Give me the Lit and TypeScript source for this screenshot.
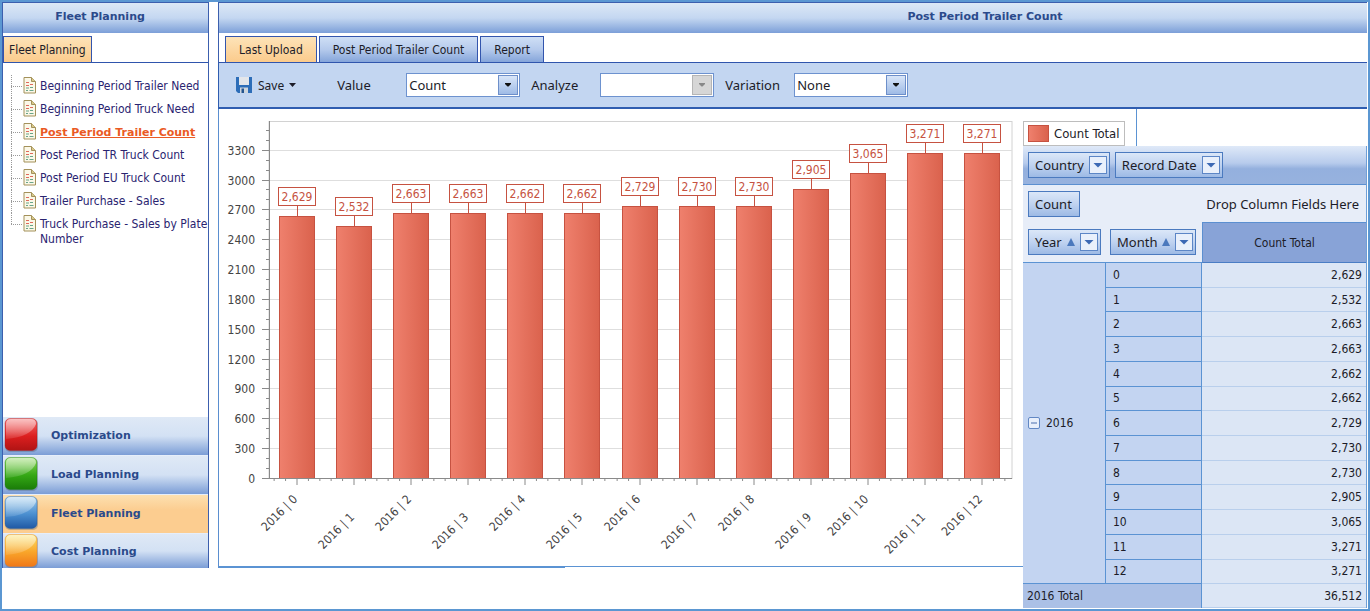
import { LitElement, html, css, svg } from "lit";
import { customElement, state } from "lit/decorators.js";
import { classMap } from "lit/directives/class-map.js";

const COUNTS = [2629, 2532, 2663, 2663, 2662, 2662, 2729, 2730, 2730, 2905, 3065, 3271, 3271];
const fmt = (n: number) => n.toLocaleString("en-US");

@customElement("period-chart")
export class PeriodChart extends LitElement {
  static styles = css`
    :host { display: block; }
    svg { display: block; width: 100%; height: auto; font-family: "DejaVu Sans Condensed", "Noto Sans", sans-serif; font-size: 12px; }
    .grid { stroke: #dedede; }
    .frame { fill: none; stroke: #d2d2d2; }
    .axis { stroke: #8a8a8a; }
    .tick { fill: #444; text-anchor: end; }
    .bar { fill: url(#barFill); stroke: #c65241; }
    .stem { stroke: #c65241; }
    .box { fill: #fff; stroke: #c65241; }
    .value { fill: #c65241; text-anchor: middle; }
  `;

  render() {
    const left = 50, right = 793, top = 12, base = 369;
    const scale = 0.0995;
    const step = (right - left) / COUNTS.length;
    const y = (v: number) => Math.round(base - v * scale);
    const majors = Array.from({ length: 12 }, (_, i) => i * 300);
    const minors = Array.from({ length: 36 }, (_, i) => i * 100).filter((v) => v % 300);
    const subs = [-2, -1, 0, 1, 2];
    return html`<svg viewBox="0 0 804 457" role="img" aria-label="Count total by period">
      <defs>
        <linearGradient id="barFill">
          <stop offset="0" stop-color="#ef806d"></stop>
          <stop offset="1" stop-color="#da624d"></stop>
        </linearGradient>
      </defs>
      <rect class="frame" x=${left} y=${top + 0.5} width=${right - left} height=${base - top}></rect>
      ${majors.map((v) => svg`
        <line class="grid" x1=${left} x2=${right} y1=${y(v) + 0.5} y2=${y(v) + 0.5}></line>
        <line class="axis" x1=${left - 7} x2=${left} y1=${y(v) + 0.5} y2=${y(v) + 0.5}></line>
        <text class="tick" x="36" y=${y(v) + 5}>${v}</text>`)}
      ${minors.map((v) => svg`<line class="axis" x1=${left - 3} x2=${left} y1=${y(v) + 0.5} y2=${y(v) + 0.5}></line>`)}
      ${COUNTS.map((v, i) => {
        const x = Math.floor(left + step * (i + 0.5) - 0.5);
        const t = y(v);
        const ly = i % 2 ? 406 : 388;
        return svg`
          <rect class="bar" x=${x - 17.5} y=${t + 0.5} width="35" height=${base - t}></rect>
          <line class="stem" x1=${x + 0.5} x2=${x + 0.5} y1=${t - 11} y2=${t}></line>
          <rect class="box" x=${x - 18.5} y=${t - 28.5} width="37" height="18"></rect>
          <text class="value" x=${x} y=${t - 15}>${fmt(v)}</text>
          ${subs.map((k) => svg`<line class="axis" x1=${x + k * step / 5} x2=${x + k * step / 5} y1=${base} y2=${base + (k ? 3 : 7)}></line>`)}
          <text class="tick" transform="translate(${x + 1} ${ly + 3}) rotate(-45)">2016 | ${i}</text>`;
      })}
      <line class="axis" x1=${left + 0.5} x2=${left + 0.5} y1=${top} y2=${base}></line>
      <line class="axis" x1=${left} x2=${right} y1=${base + 0.5} y2=${base + 0.5}></line>
    </svg>`;
  }
}

@customElement("pivot-grid")
export class PivotGrid extends LitElement {
  @state() private open = true;

  static styles = css`
    :host { display: flex; flex-direction: column; flex: 1; color: #1c1c28; border-right: 1px solid #6f9fd6;
      font: 12px "DejaVu Sans Condensed", "Noto Sans", sans-serif; }
    .filters { display: flex; gap: 5px; align-items: center; height: 39px; box-sizing: border-box; padding: 0 5px;
      background: linear-gradient(#dfe9f8, #b7cbec 45%, #94b0de 60%, #97b2de); border-bottom: 1px solid #5b8fd0; }
    .field { display: inline-flex; align-items: center; gap: 5px; height: 26px; box-sizing: border-box; padding: 0 2px 0 6px;
      border: 1px solid #4b7abf; background: linear-gradient(#dbe7f8, #c0d3f0 50%, #9dbae5); font: 13px "Noto Sans", sans-serif; color: #1c1c28; white-space: nowrap; }
    .field.plain { padding-right: 7px; }
    .drop { width: 16px; height: 16px; border: 1px solid #5c86c6; background: #e9f0fb; display: block; }
    .sort { width: 8px; height: 8px; display: block; }
    table { flex: 1; width: 100%; border-collapse: separate; border-spacing: 0; table-layout: fixed; }
    .c1 { width: 83px; }
    .c2 { width: 96px; }
    th, td { padding: 0; font-weight: normal; text-align: left; }
    .zone { height: 37px; padding-left: 5px; background: #e7edf8; }
    .hint { text-align: right; padding: 0 7px 0 0; font: 13px "Noto Sans", sans-serif; white-space: nowrap; }
    .head { height: 39px; padding-left: 5px; background: #e7edf8; border-bottom: 1px solid #5b93d3; }
    .head.next { padding-left: 4px; }
    .total { height: 39px; text-align: center; background: #88a3d7; border-top: 1px solid #5b8fd0; border-left: 1px solid #5b8fd0; border-bottom: 1px solid #4a7dc4; padding: 0; }
    .year, .month, .grand { background: #c3d4f1; }
    .year { padding-left: 4px; border-right: 1px solid #5b93d3; border-bottom: 1px solid #5b93d3; }
    .month { height: 22px; padding-left: 7px; border-right: 1px solid #5b93d3; border-bottom: 1px solid #5b93d3; }
    .grand { height: 22px; padding-left: 4px; background: #abc0e6; border-right: 1px solid #5b93d3; }
    .num { text-align: right; padding-right: 4px; background: #dce6f5; border-bottom: 1px solid #b9cfec; }
    .toggle { display: flex; align-items: center; gap: 5px; padding: 0; border: 0; background: none; font: inherit; color: inherit; }
    .toggle svg { width: 14px; height: 14px; }
  `;

  private drop() {
    return html`<svg class="drop" viewBox="0 0 16 16" aria-hidden="true"><path d="M3.500 6h9L8 10.500z" fill="#3c69b4"></path></svg>`;
  }

  private field(name: string, sorted = false) {
    return html`<button class="field" type="button">${name}
      ${sorted ? html`<svg class="sort" viewBox="0 0 8 8" aria-hidden="true"><path d="M4 0l4 8H0z" fill="#4b79bd"></path></svg>` : ""}
      ${this.drop()}</button>`;
  }

  render() {
    const total = COUNTS.reduce((a, b) => a + b, 0);
    const rows = this.open ? COUNTS : [];
    return html`
      <div class="filters">${this.field("Country")}${this.field("Record Date")}</div>
      <table>
        <colgroup><col class="c1"><col class="c2"><col></colgroup>
        <thead>
          <tr>
            <td class="zone" colspan="2"><button class="field plain" type="button">Count</button></td>
            <td class="zone hint">Drop Column Fields Here</td>
          </tr>
          <tr>
            <th class="head" scope="col">${this.field("Year", true)}</th>
            <th class="head next" scope="col">${this.field("Month", true)}</th>
            <th class="total" scope="col">Count Total</th>
          </tr>
        </thead>
        <tbody>
          ${rows.map((v, i) => html`<tr>
            ${i === 0 ? html`<th class="year" scope="rowgroup" rowspan=${rows.length}>
              <button class="toggle" type="button" aria-expanded="true" @click=${() => (this.open = false)}>
                <svg viewBox="0 0 14 14" aria-hidden="true"><rect x="1.500" y="1.500" width="11" height="11" rx="1.500" fill="#e8effb" stroke="#6288c4"></rect><path d="M4 7h6" stroke="#4b6fae"></path></svg>2016
              </button></th>` : ""}
            <th class="month" scope="row">${i}</th>
            <td class="num">${fmt(v)}</td>
          </tr>`)}
          <tr>
            <th class="grand" scope="row" colspan="2" @click=${() => (this.open = true)}>2016 Total</th>
            <td class="num">${fmt(total)}</td>
          </tr>
        </tbody>
      </table>`;
  }
}

const REPORTS = [
  "Beginning Period Trailer Need",
  "Beginning Period Truck Need",
  "Post Period Trailer Count",
  "Post Period TR Truck Count",
  "Post Period EU Truck Count",
  "Trailer Purchase - Sales",
  "Truck Purchase - Sales by Plate Number",
];

const MODULES = [
  { name: "Optimization", tone: "red" },
  { name: "Load Planning", tone: "green" },
  { name: "Fleet Planning", tone: "blue" },
  { name: "Cost Planning", tone: "orange" },
];

@customElement("app-root")
export class AppRoot extends LitElement {
  @state() private tab = 0;

  static styles = css`
    :host { display: flex; box-sizing: border-box; min-height: 100vh; padding: 0 0 1px; gap: 10px; background: #fff;
      border: 2px solid #5b97d2; font-family: "DejaVu Sans Condensed", "Noto Sans", sans-serif; font-size: 12px; color: #1c1c28; }
    .side { flex: none; width: 207px; box-sizing: border-box; margin: 0 -1px 40px 0; display: flex; flex-direction: column;
      border: 1px solid #3c5fae; border-bottom: 0; }
    .main { flex: 1; min-width: 0; padding-right: 1px; display: flex; flex-direction: column; }
    .title { margin: 0; height: 31px; box-sizing: border-box; padding-bottom: 3px; display: flex; align-items: center; justify-content: center;
      font: bold 11px "DejaVu Sans", sans-serif; color: #2b4a8b; background: linear-gradient(#dce8f6, #c4d7f1 50%, #7c9fd8); }
    .side .title { height: 30px; padding-right: 11px; }
    .main .title { padding-left: 384px; border-top: 1px solid #3c5fae; border-left: 1px solid #3c5fae; }
    .tabs { display: flex; gap: 2px; padding-top: 3px; border-bottom: 1px solid #2f55ad; }
    .main .tabs { padding-left: 6px; border-left: 1px solid #3c5fae; }
    .tab { height: 26px; padding: 0 13px; border: 1px solid #3355ad; border-bottom: 0; font: inherit; color: #1c1c28;
      background: linear-gradient(#cfdff5, #b5caec 50%, #85a5da); }
    .tab.on { background: linear-gradient(#fde3b8, #fbcb8c); }
    .side .tab { padding: 0 5px; }
    .tree { flex: 1; list-style: none; margin: 0 -4px 0 0; padding: 12px 0 0 8px; }
    .node { position: relative; display: flex; min-height: 23px; }
    .node::before { content: ""; width: 11px; height: 11px; flex: none; border-bottom: 1px dotted #999; }
    .node::after { content: ""; position: absolute; left: 0; top: 0; bottom: 0; border-left: 1px dotted #999; }
    .node:last-child::after { bottom: auto; height: 11px; }
    .node svg { flex: none; width: 13px; height: 17px; margin: 2px 4px 0 1px; }
    .node a { color: #2a2470; text-decoration: none; line-height: 15px; padding-top: 4px; }
    .node a.on { font: bold 11px/15px "DejaVu Sans", sans-serif; color: #ea5a24; text-decoration: underline; }
    .mod { flex: none; height: 39px; display: flex; align-items: center; gap: 13px; padding: 0 0 2px 1px; border: 0; border-bottom: 1px solid #e6eefa;
      background: linear-gradient(#dfe9f6 0, #d3e1f4 50%, #7b9dd6); font: bold 11px "DejaVu Sans", sans-serif; color: #2b4a8b; text-align: left; }
    .mod.on { background: linear-gradient(#fde0b0, #fccd90 40%); }
    .mod:last-child { height: 34px; padding-bottom: 0; border-bottom: 0; overflow: hidden; }
    .cube { width: 34px; height: 34px; flex: none; }
    .bar { display: flex; align-items: center; height: 46px; box-sizing: border-box; padding-left: 16px; background: #c3d6f1;
      border-bottom: 2px solid #2f5db0; border-left: 1px solid #2f5db0; font: 13px "Noto Sans", sans-serif; }
    .save { display: flex; align-items: center; gap: 5px; padding: 0; border: 0; background: none; font: inherit; font-size: 12px; color: inherit; margin-right: 41px; }
    .disk { width: 18px; height: 18px; }
    .caret { width: 7px; height: 4px; }
    .bar label { flex: none; width: 69px; }
    .combo + label { margin-left: 11px; }
    .combo { position: relative; width: 114px; height: 24px; }
    .combo select { appearance: none; width: 100%; height: 24px; box-sizing: border-box; padding: 0 22px 0 2px; border: 1px solid #6d92cf; border-radius: 0; background: #fff;
      font: inherit; color: #1c1c28; opacity: 1; }
    .combo svg { position: absolute; right: 2px; top: 2px; width: 18px; height: 18px; border: 1px solid #6d8fca; background: linear-gradient(#d8e5f8, #9fbbe6); pointer-events: none; }
    .combo.off svg { border-color: #b5b5b5; background: #d6d6d6; }
    .work { flex: 1; display: flex; }
    .plot { flex: 1; min-width: 0; align-self: flex-start; border-left: 1px solid #5b8fd0; }
    .plot::after { content: ""; display: block; height: 1px; width: 43%; background: #5b93d3; }
    .plot period-chart { border-bottom: 1px solid #5b93d3; }
    .data { flex: none; width: 344px; display: flex; flex-direction: column; }
    .legend { align-self: flex-start; padding: 12px 11px 0 0; border-right: 1px solid #5b93d3; }
    .key { display: flex; align-items: center; gap: 5px; height: 25px; box-sizing: border-box; padding: 0 4px; border: 1px solid #bdbdbd; font-size: 13px; }
    .swatch { width: 19px; height: 15px; border: 1px solid #c65241; background: linear-gradient(90deg, #ef806d, #da624d); }
  `;

  private page() {
    return html`<svg viewBox="0 0 13 17" aria-hidden="true">
      <path d="M1 .5h7.500l4 4V16H1z" fill="#fbf8e8" stroke="#a3915a"></path>
      <path d="M8.500.5v4h4" fill="#d8c98c" stroke="#a3915a"></path>
      <path d="M3 5.500h3M3 8.500h3M7 7.500h3" stroke="#e0695c"></path>
      <path d="M3 11h3M7 10.500h3M3 13.500h2M6.500 13.500h4" stroke="#69a58a"></path>
    </svg>`;
  }

  private cube(tone: string) {
    const tones: Record<string, string[]> = {
      red: ["#f46a6a", "#dc1f1f", "#b01414"],
      green: ["#8ed85c", "#35a815", "#1a7c08"],
      blue: ["#9fcdee", "#4b8fd0", "#2059a4"],
      orange: ["#fbe26a", "#f9a52a", "#f07818"],
    };
    const [a, b, c] = tones[tone];
    return html`<svg class="cube" viewBox="0 0 34 34" aria-hidden="true">
      <defs>
        <linearGradient id=${"f" + tone} x2="0" y2="1"><stop offset="0" stop-color=${a}></stop><stop offset=".55" stop-color=${b}></stop><stop offset="1" stop-color=${c}></stop></linearGradient>
        <linearGradient id=${"g" + tone} x2="0" y2="1"><stop offset="0" stop-color="#fff" stop-opacity=".6"></stop><stop offset="1" stop-color="#fff" stop-opacity=".1"></stop></linearGradient>
      </defs>
      <rect x="1" y="1" width="33" height="33" rx="5" fill="#456" opacity=".3"></rect>
      <rect x="1" y=".5" width="32" height="32" rx="5" fill="url(#${"f" + tone})" stroke=${c} stroke-opacity=".35"></rect>
      <path d="M2 6q0-5 5-5h20q5 0 5 5Q27 19 2 21z" fill="url(#${"g" + tone})"></path>
    </svg>`;
  }

  private combo(id: string, options: string[], off = false) {
    return html`<span class=${classMap({ combo: true, off })}>
      <select id=${id} ?disabled=${off}>${options.map((o) => html`<option>${o}</option>`)}</select>
      <svg viewBox="0 0 18 18" aria-hidden="true"><path d="M6 7h6v1l-2.500 2.500h-1L6 8z" fill=${off ? "#888" : "#111"}></path></svg>
    </span>`;
  }

  render() {
    return html`
      <aside class="side">
        <h2 class="title">Fleet Planning</h2>
        <div class="tabs"><button class="tab on" type="button">Fleet Planning</button></div>
        <ul class="tree">
          ${REPORTS.map((r, i) => html`<li class="node">${this.page()}<a href="#" class=${classMap({ on: i === 2 })}>${r}</a></li>`)}
        </ul>
        ${MODULES.map((m) => html`<button type="button" class=${classMap({ mod: true, on: m.tone === "blue" })}>${this.cube(m.tone)}${m.name}</button>`)}
      </aside>
      <main class="main">
        <h1 class="title">Post Period Trailer Count</h1>
        <div class="tabs">
          ${["Last Upload", "Post Period Trailer Count", "Report"].map((t, i) => html`
            <button type="button" class=${classMap({ tab: true, on: i === this.tab })} @click=${() => (this.tab = i)}>${t}</button>`)}
        </div>
        <div class="bar">
          <button class="save" type="button">
            <svg class="disk" viewBox="0 0 18 18" aria-hidden="true">
              <path d="M1 1h16v16H3l-2-2z" fill="#2c6db8"></path>
              <path d="M4 1h10v8H4z" fill="#e3e6ea"></path>
              <path d="M5 11.500h8V17H5z" fill="#cfd6dd"></path>
              <path d="M6.500 12.500h2.500V17H6.500z" fill="#24558f"></path>
            </svg>
            Save
            <svg class="caret" viewBox="0 0 7 4" aria-hidden="true"><path d="M0 0h7L3.500 4z" fill="#1c1c28"></path></svg>
          </button>
          <label for="value">Value</label>${this.combo("value", ["Count"])}
          <label for="analyze">Analyze</label>${this.combo("analyze", [""], true)}
          <label for="variation">Variation</label>${this.combo("variation", ["None"])}
        </div>
        <div class="work">
          <div class="plot"><period-chart></period-chart></div>
          <div class="data">
            <div class="legend"><div class="key"><span class="swatch"></span>Count Total</div></div>
            <pivot-grid></pivot-grid>
          </div>
        </div>
      </main>`;
  }
}
